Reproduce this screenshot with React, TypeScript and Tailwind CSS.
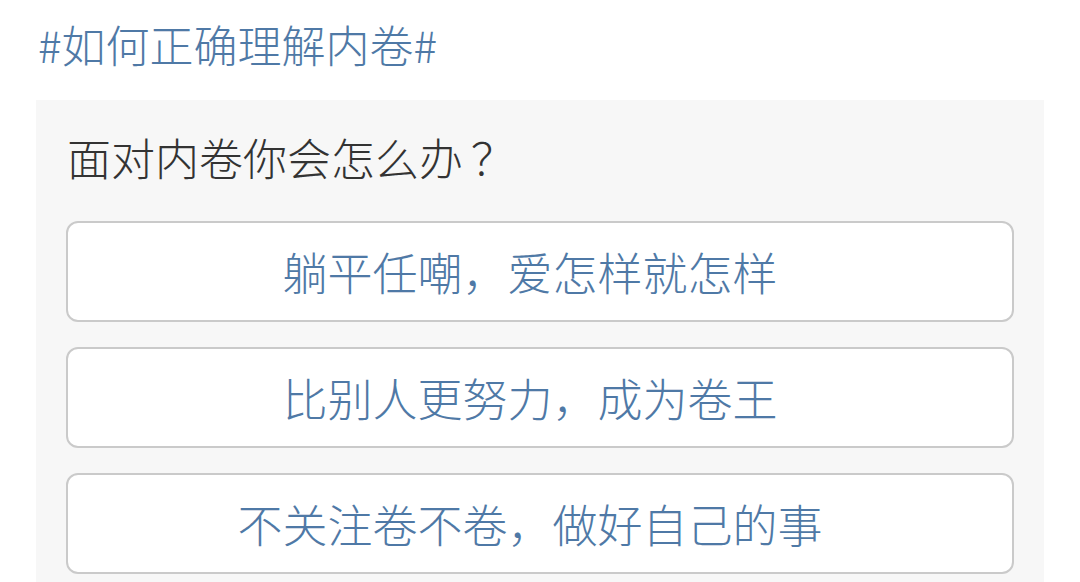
import React from 'react';

const options = ['躺平任嘲，爱怎样就怎样', '比别人更努力，成为卷王', '不关注卷不卷，做好自己的事'];

export default function App() {
  return (
    <div
      className="w-[1080px] h-[582px] overflow-hidden bg-white font-light"
      style={{ fontFamily: '"Noto Sans CJK SC", "Noto Sans", sans-serif' }}
    >
      {/* Topic tag */}
      <div className="pl-[38px] pt-[14px] pb-[3px] text-[44px] leading-[60px] text-[#4f79a6]">#如何正确理解内卷#</div>

      {/* Poll card */}
      <div className="mx-[36px] mt-[23px] bg-[#f7f7f7] px-[30px] pt-[32px] pb-[20px]">
        <div className="pl-[1px] text-[44px] leading-[50px] text-[#333333]">
          面对内卷你会怎么办<span className="pl-[8px]">？</span>
        </div>
        <div className="mt-[39px] flex flex-col gap-[25px]">
          {options.map((opt) => (
            <button
              key={opt}
              className="flex h-[101px] w-full items-center justify-center rounded-[12px] border-2 border-[#cacaca] bg-white pr-[20px] text-[45px] font-light leading-none text-[#4f79a6]"
            >
              {opt}
            </button>
          ))}
        </div>
      </div>
    </div>
  );
}
